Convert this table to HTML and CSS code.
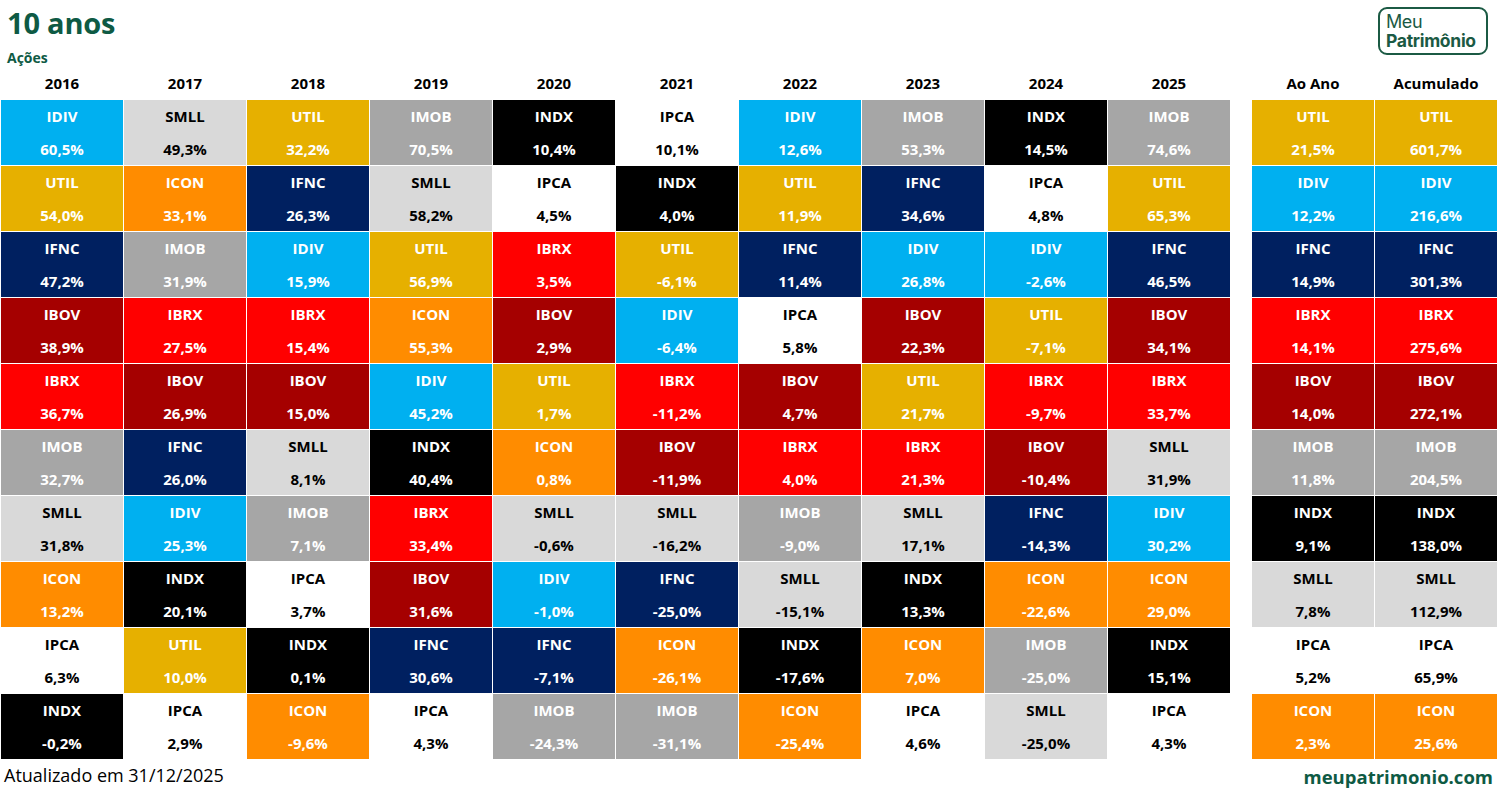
FILE: index.html
```html
<!DOCTYPE html>
<html lang="pt-BR">
<head>
<meta charset="utf-8">
<title>10 anos - Ações</title>
<link rel="stylesheet" href="styles.css">
</head>
<body>
<header class="top">
  <div class="titles">
    <h1 class="title">10 anos</h1>
    <div class="subtitle">Ações</div>
  </div>
  <div class="logo">
    <span class="logo-meu">Meu</span>
    <span class="logo-pat">Patrimônio</span>
  </div>
</header>
<main class="board">
  <section class="grid years">
    <div class="h">2016</div><div class="h">2017</div><div class="h">2018</div><div class="h">2019</div><div class="h">2020</div><div class="h">2021</div><div class="h">2022</div><div class="h">2023</div><div class="h">2024</div><div class="h">2025</div>

    <div class="c idiv"><span>IDIV</span><span>60,5%</span></div>
    <div class="c smll"><span>SMLL</span><span>49,3%</span></div>
    <div class="c util"><span>UTIL</span><span>32,2%</span></div>
    <div class="c imob"><span>IMOB</span><span>70,5%</span></div>
    <div class="c indx"><span>INDX</span><span>10,4%</span></div>
    <div class="c ipca"><span>IPCA</span><span>10,1%</span></div>
    <div class="c idiv"><span>IDIV</span><span>12,6%</span></div>
    <div class="c imob"><span>IMOB</span><span>53,3%</span></div>
    <div class="c indx"><span>INDX</span><span>14,5%</span></div>
    <div class="c imob"><span>IMOB</span><span>74,6%</span></div>

    <div class="c util"><span>UTIL</span><span>54,0%</span></div>
    <div class="c icon"><span>ICON</span><span>33,1%</span></div>
    <div class="c ifnc"><span>IFNC</span><span>26,3%</span></div>
    <div class="c smll"><span>SMLL</span><span>58,2%</span></div>
    <div class="c ipca"><span>IPCA</span><span>4,5%</span></div>
    <div class="c indx"><span>INDX</span><span>4,0%</span></div>
    <div class="c util"><span>UTIL</span><span>11,9%</span></div>
    <div class="c ifnc"><span>IFNC</span><span>34,6%</span></div>
    <div class="c ipca"><span>IPCA</span><span>4,8%</span></div>
    <div class="c util"><span>UTIL</span><span>65,3%</span></div>

    <div class="c ifnc"><span>IFNC</span><span>47,2%</span></div>
    <div class="c imob"><span>IMOB</span><span>31,9%</span></div>
    <div class="c idiv"><span>IDIV</span><span>15,9%</span></div>
    <div class="c util"><span>UTIL</span><span>56,9%</span></div>
    <div class="c ibrx"><span>IBRX</span><span>3,5%</span></div>
    <div class="c util"><span>UTIL</span><span>-6,1%</span></div>
    <div class="c ifnc"><span>IFNC</span><span>11,4%</span></div>
    <div class="c idiv"><span>IDIV</span><span>26,8%</span></div>
    <div class="c idiv"><span>IDIV</span><span>-2,6%</span></div>
    <div class="c ifnc"><span>IFNC</span><span>46,5%</span></div>

    <div class="c ibov"><span>IBOV</span><span>38,9%</span></div>
    <div class="c ibrx"><span>IBRX</span><span>27,5%</span></div>
    <div class="c ibrx"><span>IBRX</span><span>15,4%</span></div>
    <div class="c icon"><span>ICON</span><span>55,3%</span></div>
    <div class="c ibov"><span>IBOV</span><span>2,9%</span></div>
    <div class="c idiv"><span>IDIV</span><span>-6,4%</span></div>
    <div class="c ipca"><span>IPCA</span><span>5,8%</span></div>
    <div class="c ibov"><span>IBOV</span><span>22,3%</span></div>
    <div class="c util"><span>UTIL</span><span>-7,1%</span></div>
    <div class="c ibov"><span>IBOV</span><span>34,1%</span></div>

    <div class="c ibrx"><span>IBRX</span><span>36,7%</span></div>
    <div class="c ibov"><span>IBOV</span><span>26,9%</span></div>
    <div class="c ibov"><span>IBOV</span><span>15,0%</span></div>
    <div class="c idiv"><span>IDIV</span><span>45,2%</span></div>
    <div class="c util"><span>UTIL</span><span>1,7%</span></div>
    <div class="c ibrx"><span>IBRX</span><span>-11,2%</span></div>
    <div class="c ibov"><span>IBOV</span><span>4,7%</span></div>
    <div class="c util"><span>UTIL</span><span>21,7%</span></div>
    <div class="c ibrx"><span>IBRX</span><span>-9,7%</span></div>
    <div class="c ibrx"><span>IBRX</span><span>33,7%</span></div>

    <div class="c imob"><span>IMOB</span><span>32,7%</span></div>
    <div class="c ifnc"><span>IFNC</span><span>26,0%</span></div>
    <div class="c smll"><span>SMLL</span><span>8,1%</span></div>
    <div class="c indx"><span>INDX</span><span>40,4%</span></div>
    <div class="c icon"><span>ICON</span><span>0,8%</span></div>
    <div class="c ibov"><span>IBOV</span><span>-11,9%</span></div>
    <div class="c ibrx"><span>IBRX</span><span>4,0%</span></div>
    <div class="c ibrx"><span>IBRX</span><span>21,3%</span></div>
    <div class="c ibov"><span>IBOV</span><span>-10,4%</span></div>
    <div class="c smll"><span>SMLL</span><span>31,9%</span></div>

    <div class="c smll"><span>SMLL</span><span>31,8%</span></div>
    <div class="c idiv"><span>IDIV</span><span>25,3%</span></div>
    <div class="c imob"><span>IMOB</span><span>7,1%</span></div>
    <div class="c ibrx"><span>IBRX</span><span>33,4%</span></div>
    <div class="c smll"><span>SMLL</span><span>-0,6%</span></div>
    <div class="c smll"><span>SMLL</span><span>-16,2%</span></div>
    <div class="c imob"><span>IMOB</span><span>-9,0%</span></div>
    <div class="c smll"><span>SMLL</span><span>17,1%</span></div>
    <div class="c ifnc"><span>IFNC</span><span>-14,3%</span></div>
    <div class="c idiv"><span>IDIV</span><span>30,2%</span></div>

    <div class="c icon"><span>ICON</span><span>13,2%</span></div>
    <div class="c indx"><span>INDX</span><span>20,1%</span></div>
    <div class="c ipca"><span>IPCA</span><span>3,7%</span></div>
    <div class="c ibov"><span>IBOV</span><span>31,6%</span></div>
    <div class="c idiv"><span>IDIV</span><span>-1,0%</span></div>
    <div class="c ifnc"><span>IFNC</span><span>-25,0%</span></div>
    <div class="c smll"><span>SMLL</span><span>-15,1%</span></div>
    <div class="c indx"><span>INDX</span><span>13,3%</span></div>
    <div class="c icon"><span>ICON</span><span>-22,6%</span></div>
    <div class="c icon"><span>ICON</span><span>29,0%</span></div>

    <div class="c ipca"><span>IPCA</span><span>6,3%</span></div>
    <div class="c util"><span>UTIL</span><span>10,0%</span></div>
    <div class="c indx"><span>INDX</span><span>0,1%</span></div>
    <div class="c ifnc"><span>IFNC</span><span>30,6%</span></div>
    <div class="c ifnc"><span>IFNC</span><span>-7,1%</span></div>
    <div class="c icon"><span>ICON</span><span>-26,1%</span></div>
    <div class="c indx"><span>INDX</span><span>-17,6%</span></div>
    <div class="c icon"><span>ICON</span><span>7,0%</span></div>
    <div class="c imob"><span>IMOB</span><span>-25,0%</span></div>
    <div class="c indx"><span>INDX</span><span>15,1%</span></div>

    <div class="c indx"><span>INDX</span><span>-0,2%</span></div>
    <div class="c ipca"><span>IPCA</span><span>2,9%</span></div>
    <div class="c icon"><span>ICON</span><span>-9,6%</span></div>
    <div class="c ipca"><span>IPCA</span><span>4,3%</span></div>
    <div class="c imob"><span>IMOB</span><span>-24,3%</span></div>
    <div class="c imob"><span>IMOB</span><span>-31,1%</span></div>
    <div class="c icon"><span>ICON</span><span>-25,4%</span></div>
    <div class="c ipca"><span>IPCA</span><span>4,6%</span></div>
    <div class="c smll"><span>SMLL</span><span>-25,0%</span></div>
    <div class="c ipca"><span>IPCA</span><span>4,3%</span></div>
  </section>

  <section class="grid totals">
    <div class="h">Ao Ano</div><div class="h">Acumulado</div>
    <div class="c util"><span>UTIL</span><span>21,5%</span></div>
    <div class="c util"><span>UTIL</span><span>601,7%</span></div>
    <div class="c idiv"><span>IDIV</span><span>12,2%</span></div>
    <div class="c idiv"><span>IDIV</span><span>216,6%</span></div>
    <div class="c ifnc"><span>IFNC</span><span>14,9%</span></div>
    <div class="c ifnc"><span>IFNC</span><span>301,3%</span></div>
    <div class="c ibrx"><span>IBRX</span><span>14,1%</span></div>
    <div class="c ibrx"><span>IBRX</span><span>275,6%</span></div>
    <div class="c ibov"><span>IBOV</span><span>14,0%</span></div>
    <div class="c ibov"><span>IBOV</span><span>272,1%</span></div>
    <div class="c imob"><span>IMOB</span><span>11,8%</span></div>
    <div class="c imob"><span>IMOB</span><span>204,5%</span></div>
    <div class="c indx"><span>INDX</span><span>9,1%</span></div>
    <div class="c indx"><span>INDX</span><span>138,0%</span></div>
    <div class="c smll"><span>SMLL</span><span>7,8%</span></div>
    <div class="c smll"><span>SMLL</span><span>112,9%</span></div>
    <div class="c ipca"><span>IPCA</span><span>5,2%</span></div>
    <div class="c ipca"><span>IPCA</span><span>65,9%</span></div>
    <div class="c icon"><span>ICON</span><span>2,3%</span></div>
    <div class="c icon"><span>ICON</span><span>25,6%</span></div>
  </section>
</main>
<footer class="foot">
  <span class="updated">Atualizado em 31/12/2025</span>
  <span class="site">meupatrimonio.com</span>
</footer>
</body>
</html>
```

FILE: styles.css
```css
* { box-sizing: border-box; }

html, body {
  margin: 0;
  padding: 0;
  background: #ffffff;
}

body {
  width: 1498px;
  height: 793px;
  overflow: hidden;
  font-family: "Open Sans", "Liberation Sans", sans-serif;
  color: #000;
}

.top {
  height: 72px;
  display: flex;
  justify-content: space-between;
  align-items: flex-start;
  padding: 0 10px 0 7px;
}

.title {
  margin: 5px 0 0 0;
  font-size: 29px;
  line-height: 36px;
  font-weight: 700;
  color: #0e5a44;
  letter-spacing: -0.2px;
}

.subtitle {
  margin-top: 8px;
  font-size: 14px;
  line-height: 18px;
  font-weight: 700;
  color: #0e5a44;
}

.logo {
  margin-top: 7px;
  width: 110px;
  height: 48px;
  border: 2px solid #1b5a44;
  border-radius: 9px;
  display: flex;
  flex-direction: column;
  justify-content: center;
  padding-left: 6px;
  color: #1b5a44;
  font-family: "Inter", "Open Sans", sans-serif;
}

.logo-meu {
  font-size: 18px;
  line-height: 19px;
  font-weight: 400;
  letter-spacing: -0.4px;
}

.logo-pat {
  font-size: 17.5px;
  line-height: 19px;
  font-weight: 700;
  letter-spacing: -0.3px;
}

.board {
  display: flex;
  gap: 22px;
  padding-left: 1px;
}

.grid {
  display: grid;
  grid-auto-rows: 65px;
  grid-template-rows: 27px;
  column-gap: 1px;
  row-gap: 1px;
  background: #ffffff;
}

.years { grid-template-columns: repeat(10, 122px); }
.totals { grid-template-columns: repeat(2, 122px); }

.h {
  font-size: 15px;
  font-weight: 700;
  line-height: 22px;
  text-align: center;
}

.c {
  display: flex;
  flex-direction: column;
  align-items: center;
  font-size: 15px;
  font-weight: 700;
  color: #ffffff;
}

.c span {
  display: block;
  line-height: 20px;
}

.c span:first-child { margin-top: 6px; }
.c span:last-child { margin-top: 13px; }

.idiv { background: #00b0f0; }
.smll { background: #d9d9d9; color: #000; }
.util { background: #e6b000; }
.imob { background: #a6a6a6; }
.indx { background: #000000; }
.ipca { background: #ffffff; color: #000; }
.ifnc { background: #002060; }
.ibov { background: #a50000; }
.ibrx { background: #ff0000; }
.icon { background: #ff8c00; }

.foot {
  display: flex;
  justify-content: space-between;
  align-items: baseline;
  padding: 2px 5px 0 4px;
  height: 33px;
}

.updated {
  font-size: 18px;
  line-height: 28px;
  font-weight: 400;
}

.site {
  font-size: 18.5px;
  line-height: 28px;
  font-weight: 700;
  color: #0e5a44;
  position: relative;
  top: 2px;
}
```
